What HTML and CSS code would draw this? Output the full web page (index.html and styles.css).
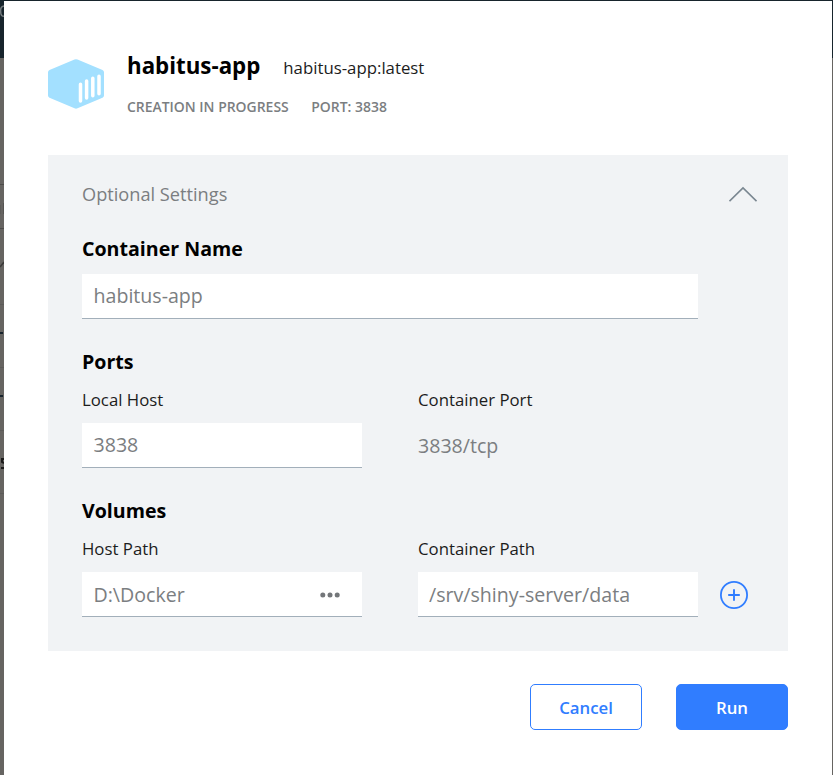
FILE: index.html
```
<!DOCTYPE html>
<html lang="en">
<head>
<meta charset="utf-8">
<title>Run container</title>
<link rel="stylesheet" href="styles.css">
</head>
<body>
<div class="backdrop">
  <svg class="backdrop-page" width="4" height="775" viewBox="0 0 4 775" aria-hidden="true">
    <path d="M4 6C1 6 0 9 1 14Q2 17 4 16" fill="none" stroke="#747b7e" stroke-width="1.5"/>
    <path d="M0 184.5h4M0 228.5h4" stroke="#4d4c4a"/>
    <path d="M0 304.5h4M0 367.5h4M0 430.5h4M0 493.5h4" stroke="#5c5b59"/>
    <path d="M0 205v9M3.5 203v11" stroke="#555452"/>
    <path d="M0 267l4-5" stroke="#3c3b3a" stroke-width="1.6"/>
    <path d="M0 333h3M0 396h3" stroke="#17232d" stroke-width="2"/>
    <path d="M4 459H2v3l2 1M1 468h3" fill="none" stroke="#1b1a19" stroke-width="2"/>
  </svg>
</div>
<main class="dialog">
  <header class="header">
    <svg class="logo" width="56" height="50" viewBox="0 0 56 50" aria-hidden="true">
      <path d="M26.5.5Q28-.2 29.500.5L54.500 11Q56 11.700 56 13.200V36.500Q56 38 54.500 38.700L29.500 49.300Q28 50 26.500 49.300L1.500 38.700Q0 38 0 36.500V13.200Q0 11.700 1.500 11Z" fill="#a3e0ff"/>
      <path d="M32.500 25.200v16.800M38.600 22v17M44.800 19.200v17.600M51 17.300v17.500" stroke="#fff" stroke-width="3.500" stroke-linecap="round"/>
    </svg>
    <div>
      <div class="title-row"><h1>habitus-app</h1><span class="image">habitus-app:latest</span></div>
      <div class="status-row"><span>CREATION IN PROGRESS</span><span>PORT: 3838</span></div>
    </div>
  </header>
  <section class="panel">
    <div class="panel-head">
      <span>Optional Settings</span>
      <svg width="28" height="16" viewBox="0 0 28 16" aria-hidden="true"><path d="M.5 15.200L14 1.900L27.500 15.200" fill="none" stroke="#7a8791" stroke-width="1.600"/></svg>
    </div>
    <h2>Container Name</h2>
    <div class="input">habitus-app</div>
    <h2 class="next">Ports</h2>
    <div class="columns">
      <div><div class="label">Local Host</div><div class="input">3838</div></div>
      <div><div class="label">Container Port</div><div class="value">3838/tcp</div></div>
    </div>
    <h2 class="next volumes">Volumes</h2>
    <div class="columns">
      <div><div class="label">Host Path</div><div class="input path browse"><span>D:\Docker</span>
        <svg width="20" height="6" viewBox="0 0 20 6" aria-hidden="true"><g fill="#737679"><circle cx="2.800" cy="3" r="2.500"/><circle cx="10" cy="3" r="2.500"/><circle cx="17.200" cy="3" r="2.500"/></g></svg></div></div>
      <div><div class="label">Container Path</div><div class="input path">/srv/shiny-server/data</div></div>
      <svg class="add" width="28" height="28" viewBox="0 0 28 28" aria-hidden="true"><circle cx="14" cy="14" r="13.100" fill="none" stroke="#307dff" stroke-width="1.800"/><path d="M8.200 14h11.600M14 8.200v11.600" stroke="#307dff" stroke-width="1.900"/></svg>
    </div>
  </section>
  <footer class="actions">
    <button class="button">Cancel</button>
    <button class="button primary">Run</button>
  </footer>
</main>
</body>
</html>
```
FILE: styles.css
```
* { box-sizing: border-box; }
body {
  margin: 0;
  height: 775px;
  padding: 1px 1px 0 4px;
  overflow: hidden;
  position: relative;
  font-family: "Open Sans", sans-serif;
  color: #000;
}
.backdrop {
  position: absolute;
  inset: 0;
  z-index: -1;
  background: linear-gradient(#17242c 58px, #666461 58px);
}
.backdrop-page { display: block; }
.dialog {
  height: 774px;
  padding: 50px 44px 0;
  background: #fff;
}
.header { display: flex; gap: 23px; height: 104px; }
.logo { margin-top: 8px; }
h1, h2 { margin: 0; }
.title-row { display: flex; align-items: baseline; gap: 23px; height: 30px; line-height: 30px; }
h1 { font-size: 22.300px; font-weight: 700; }
.image { font-size: 16.800px; color: #1c1c1c; }
.status-row {
  display: flex;
  gap: 22.500px;
  margin-top: 16px;
  font-size: 13.950px;
  line-height: 20px;
  font-weight: 600;
  color: #7b7e81;
}
.panel { height: 496px; padding: 25px 34px 0; background: #f1f3f5; }
.panel-head {
  display: flex;
  justify-content: space-between;
  align-items: center;
  height: 28px;
  margin: 0 -3px 26px 0;
  font-size: 18.200px;
  color: #7b7e81;
}
h2 { font-size: 19.600px; line-height: 30px; font-weight: 700; }
.next { margin-top: 28px; }
.next.volumes { margin-top: 27px; }
.input {
  display: flex;
  align-items: center;
  width: 100%;
  height: 45px;
  padding: 0 11.500px 1px;
  background: #fff;
  border-bottom: 1px solid #a2afba;
  font-size: 19.600px;
  color: #7b7e81;
}
.panel > .input { width: 616px; margin-top: 10px; }
.columns { display: grid; grid-template-columns: 280px 280px 28px; column-gap: 56px; }
.label { font-size: 16.800px; line-height: 24px; margin: 11px 0 11px; color: #1c1c1c; }
.value { font-size: 19.600px; line-height: 46px; color: #7b7e81; }
.input.path { padding: 1px 11px 0; }
.input.browse { justify-content: space-between; padding-left: 11.500px; padding-right: 22px; }
.add { align-self: end; margin: 0 0 8px -34px; }
.actions { display: flex; justify-content: flex-end; gap: 34px; margin-top: 33px; }
.button {
  width: 112px;
  height: 46px;
  padding: 0;
  border: 1px solid #307dff;
  border-radius: 5px;
  background: #fff;
  color: #307dff;
  font: 600 16.800px "Open Sans", sans-serif;
}
.primary { background: #307dff; color: #fff; }
```
